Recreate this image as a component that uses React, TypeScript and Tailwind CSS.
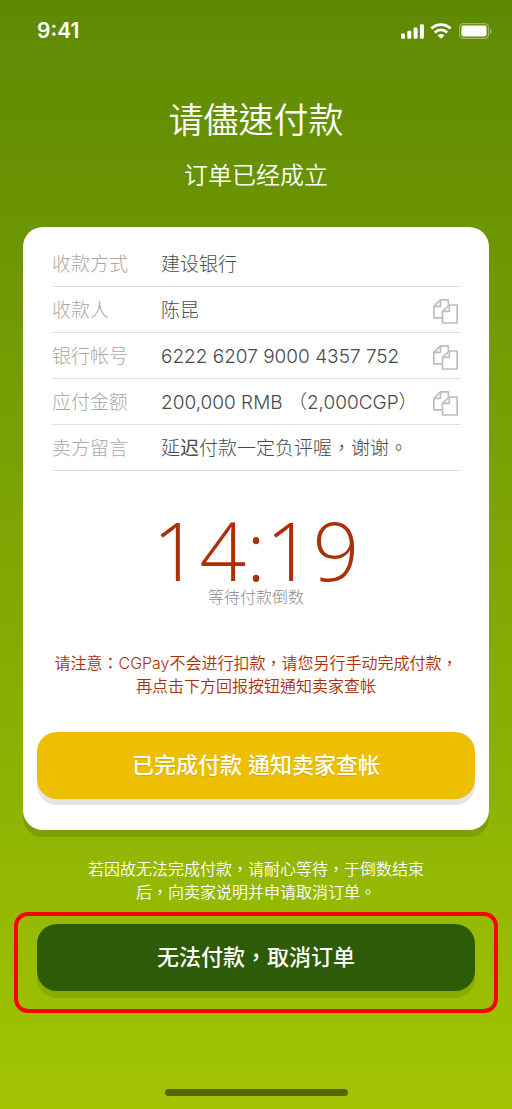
import { useState } from "react";
import type { ReactNode } from "react";

type Row = { label: string; value: ReactNode; copy?: string };

const ROWS: Row[] = [
  { label: "收款方式", value: "建设银行" },
  { label: "收款人", value: "陈昆", copy: "陈昆" },
  { label: "银行帐号", value: "6222 6207 9000 4357 752", copy: "6222620790004357752" },
  { label: "应付金额", value: "200,000 RMB （2,000CGP）", copy: "200000" },
  {
    label: "卖方留言",
    value: (
      <>
        延<span className="font-normal">迟</span>付款一定负评喔，谢谢。
      </>
    ),
  },
];

function StatusBar() {
  return (
    <div className="flex items-center justify-between pt-4 pr-5 pl-[37px]">
      <span className="text-[21px] leading-[30px] font-semibold">9:41</span>
      <div className="flex items-center gap-[6px]">
        {/* Signal */}
        <svg width="24" height="16" viewBox="0 0 24 16" fill="currentColor" aria-hidden="true">
          <rect x="1" y="10.400" width="4" height="5.400" rx="1.300" />
          <rect x="7.300" y="7.800" width="4" height="8" rx="1.300" />
          <rect x="13.600" y="4.600" width="4" height="11.200" rx="1.300" />
          <rect x="19.900" y="1.300" width="4" height="14.500" rx="1.300" />
        </svg>
        {/* Wifi */}
        <svg width="22" height="16" viewBox="0 0 22 16" fill="none" stroke="currentColor" strokeWidth="2.8" aria-hidden="true">
          <path d="M1.400 5.600a13.600 13.600 0 0 1 19.200 0" />
          <path d="M4.800 9.500a8.800 8.800 0 0 1 12.400 0" />
          <path d="M7.500 12.400a4.900 4.900 0 0 1 7 0L11 15.800Z" fill="currentColor" stroke="none" />
        </svg>
        {/* Battery */}
        <svg width="34" height="16" viewBox="0 0 34 16" aria-hidden="true">
          <rect x="1.500" y="0.600" width="29" height="14.800" rx="3.600" fill="none" stroke="currentColor" strokeOpacity="0.4" strokeWidth="1.100" />
          <rect x="3.400" y="2.600" width="25.200" height="10.800" rx="1.800" fill="currentColor" />
          <path d="M32 5.400c2 .8 2 4.400 0 5.200Z" fill="currentColor" fillOpacity="0.45" />
        </svg>
      </div>
    </div>
  );
}

function CopyIcon() {
  return (
    <svg width="25" height="25" viewBox="0 0 75 75" fill="none" stroke="currentColor" strokeWidth="5" strokeLinejoin="round" aria-hidden="true">
      <path d="M28 56.500H2.500V22L22.500 2.500H46V17" />
      <path d="M22.500 2.500V22H2.500" />
      <path d="M49 18H72.500V72H28.500V37Z" />
      <path d="M49 18V37H28.500" />
    </svg>
  );
}

export default function App() {
  const [copied, setCopied] = useState("");

  const handleCopy = (row: Row) => {
    if (!row.copy) return;
    navigator.clipboard?.writeText(row.copy);
    setCopied(row.label);
  };

  return (
    <div
      lang="zh-TW"
      className="flex min-h-dvh flex-col bg-linear-to-b from-[#5e8903] to-[#a2c403] font-['Inter','Noto_Sans_CJK_TC',sans-serif] text-white"
    >
      <StatusBar />

      <header className="mt-[50px] text-center font-[350]">
        <h1 className="text-[35px] leading-[48px]">请儘速付款</h1>
        <p className="mt-[14px] text-[24px] leading-[36px]">订单已经成立</p>
      </header>

      {/* Order card */}
      <main className="mx-[23px] mt-[33px] rounded-[20px] bg-white px-[14px] pt-[14px] pb-[31px] shadow-[0_7px_0_rgba(0,0,0,0.12)]">
        <dl className="mr-[14px] ml-[15px] text-[19px] font-light">
          {ROWS.map((row) => (
            <div key={row.label} className="flex h-[46px] items-center border-b border-[#dedede] pt-[3px]">
              <dt className="w-[109px] shrink-0 text-[#a8a8a8]">{row.label}</dt>
              <dd className="flex flex-1 items-center justify-between whitespace-nowrap text-[#4a4a4c]">
                <span>{row.value}</span>
                {row.copy && (
                  <button
                    type="button"
                    aria-label={`复制${row.label}`}
                    aria-pressed={copied === row.label}
                    onClick={() => handleCopy(row)}
                    className="mr-[3px] cursor-pointer text-[#bdbdbd]"
                  >
                    <CopyIcon />
                  </button>
                )}
              </dd>
            </div>
          ))}
        </dl>

        {/* Countdown */}
        <div className="mt-[41px] text-center">
          <div className="font-['Open_Sans',sans-serif] text-[82px] leading-[74px] font-[360] text-[#ad2f06]" role="timer">
            14:19
          </div>
          <p className="text-[16px] leading-[23px] font-light text-[#8c8c8c]">等待付款倒数</p>
        </div>

        <p className="mt-[43px] text-center text-[16px] leading-[23px] font-[350] text-[#ad2f06]">
          请注意：CGPay不会进行扣款，请您另行手动完成付款，
          <br />
          再点击下方回报按钮通知卖家查帐
        </p>

        <button
          type="button"
          className="mt-[34px] h-[67px] w-full cursor-pointer rounded-[20px] bg-[#edbf00] text-[22px] font-medium shadow-[0_6px_0_#e5e5e5] text-shadow-[0_1px_1px_rgba(0,0,0,0.12)]"
        >
          已完成付款 通知卖家查帐
        </button>
      </main>

      <p className="mt-[28px] text-center text-[16px] leading-[23px] font-[350]">
        若因故无法完成付款，请耐心等待，于倒数结束
        <br />
        后，向卖家说明并申请取消订单。
      </p>

      {/* Cancel action, outlined to stand out */}
      <div className="mx-[14px] mt-2 rounded-[14px] border-4 border-[#ff0000] px-[19px] pt-2 pb-[18px]">
        <button
          type="button"
          className="h-[67px] w-full cursor-pointer rounded-[20px] bg-[#2d5b07] text-[22px] font-medium shadow-[0_7px_0_rgba(0,0,0,0.1)]"
        >
          无法付款，取消订单
        </button>
      </div>

      {/* Home indicator */}
      <div className="mx-auto mt-auto mb-[13px] h-[7px] w-[183px] rounded-full bg-[#536603]" />
    </div>
  );
}
